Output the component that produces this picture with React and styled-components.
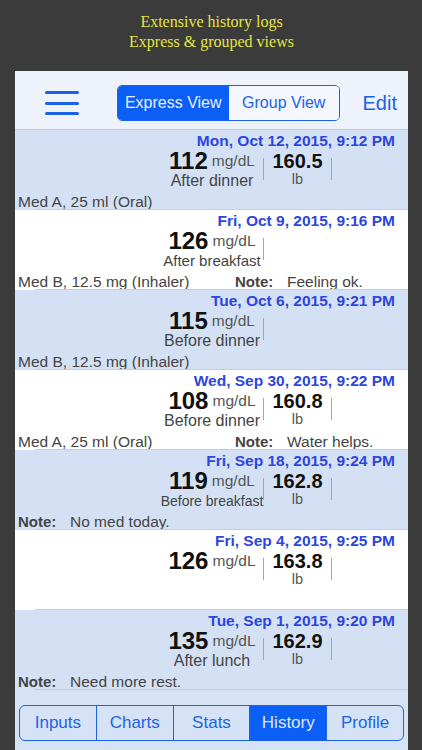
import React from "react";
import styled, { createGlobalStyle } from "styled-components";

const GlobalStyle = createGlobalStyle`
  body {
    margin: 0;
    background-color: #3b3b3b;
    font-family: "Liberation Sans", Arial, sans-serif;
  }
`;

const Page = styled.div`
  width: 422px;
  height: 750px;
  overflow: hidden;
  display: flex;
  flex-direction: column;
  padding: 0 14px 0 15px;
  box-sizing: border-box;
`;

const Caption = styled.div`
  height: 71px;
  box-sizing: border-box;
  padding-top: 12px;
  font-family: "Liberation Serif", "Times New Roman", serif;
  font-size: 16px;
  line-height: 20px;
  color: #e3e640;
  text-align: center;
`;

const Panel = styled.div`
  flex: 1;
  display: flex;
  flex-direction: column;
  background-color: #d6e2f5;
`;

const Header = styled.div`
  height: 59px;
  box-sizing: border-box;
  border-bottom: 1px solid #c6cad2;
  background-color: #eef2fa;
  display: flex;
  align-items: center;
  padding: 6px 11px 0 30px;
`;

const Hamburger = styled.div`
  width: 34px;
  display: flex;
  flex-direction: column;
  gap: 7.5px;
  margin-right: 38px;
`;

const HamburgerBar = styled.div`
  height: 3px;
  border-radius: 2px;
  background-color: #1c62e6;
`;

const Segmented = styled.div`
  width: 223px;
  height: 36px;
  box-sizing: border-box;
  border: 1.5px solid #1c62e6;
  border-radius: 5px;
  display: flex;
  overflow: hidden;
`;

const SegmentButton = styled.div`
  flex: 1;
  display: flex;
  align-items: center;
  justify-content: center;
  font-size: 16px;
  color: ${(p) => (p.$active ? "#e6eeff" : "#1c62e6")};
  background-color: ${(p) => (p.$active ? "#0b5ff5" : "#f4f7fd")};
`;

const EditButton = styled.div`
  margin-left: auto;
  font-size: 20px;
  color: #1c62e6;
`;

const Row = styled.div`
  position: relative;
  height: 80px;
  box-sizing: border-box;
  padding: 2px 13px 0 3px;
  background-color: ${(p) => (p.$blue ? "#d4e1f5" : "#ffffff")};
  display: flex;
  flex-direction: column;

  &::after {
    content: "";
    position: absolute;
    left: 20px;
    right: 0;
    bottom: 0;
    height: 1px;
    background-color: #c9ccd2;
  }
`;

const DateLine = styled.div`
  height: 18px;
  line-height: 18px;
  text-align: right;
  font-size: 15.5px;
  font-weight: 700;
  color: #2d46de;
`;

const Middle = styled.div`
  height: 42px;
  display: flex;
  align-items: flex-start;
  margin-left: 143px;
`;

const GlucoseBlock = styled.div`
  width: 102px;
  display: flex;
  flex-direction: column;
  align-items: center;
`;

const ValueLine = styled.div`
  height: 22px;
  line-height: 22px;
  white-space: nowrap;
`;

const BigValue = styled.span`
  font-size: 24px;
  font-weight: 700;
  color: #111;
`;

const Unit = styled.span`
  font-size: 15.5px;
  color: #555;
  margin-left: 4px;
  vertical-align: 3px;
`;

const Label = styled.div`
  height: 18px;
  line-height: 18px;
  font-size: ${(p) => p.$size || 16}px;
  color: #444;
  white-space: nowrap;
`;

const Divider = styled.div`
  width: 1px;
  height: 22px;
  margin-top: 8px;
  background-color: #a4a6aa;
`;

const WeightBlock = styled.div`
  width: 67px;
  display: flex;
  flex-direction: column;
  align-items: center;
`;

const WeightValue = styled.div`
  height: 22px;
  line-height: 23px;
  font-size: 20px;
  font-weight: 700;
  color: #111;
`;

const WeightUnit = styled.div`
  height: 15px;
  line-height: 15px;
  font-size: 14.5px;
  color: #555;
`;

const BottomLine = styled.div`
  margin-top: 1px;
  height: 17px;
  line-height: 17px;
  display: flex;
  font-size: 15.5px;
  color: #444;
  white-space: nowrap;
`;

const Med = styled.div`
  width: 217px;
`;

const NoteLabel = styled.span`
  display: inline-block;
  width: 52px;
  font-weight: 700;
  font-size: 15px;
`;

const TabArea = styled.div`
  padding: 15px 4px 0 4px;
`;

const TabBar = styled.div`
  height: 36px;
  box-sizing: border-box;
  border: 1.5px solid #1c62e6;
  border-radius: 6px;
  display: flex;
  overflow: hidden;
`;

const Tab = styled.div`
  flex: 1;
  display: flex;
  align-items: center;
  justify-content: center;
  font-size: 17px;
  color: ${(p) => (p.$active ? "#dfe8ff" : "#1c62e6")};
  background-color: ${(p) => (p.$active ? "#0b5ff5" : "transparent")};
  border-left: ${(p) => (p.$first ? "none" : "1.5px solid #1c62e6")};
`;

const entries = [
  {
    date: "Mon, Oct 12, 2015, 9:12 PM",
    glucose: 112,
    label: "After dinner",
    weight: "160.5",
    med: "Med A, 25 ml (Oral)",
  },
  {
    date: "Fri, Oct 9, 2015, 9:16 PM",
    glucose: 126,
    label: "After breakfast",
    labelSize: 15,
    med: "Med B, 12.5 mg (Inhaler)",
    note: "Feeling ok.",
  },
  {
    date: "Tue, Oct 6, 2015, 9:21 PM",
    glucose: 115,
    label: "Before dinner",
    med: "Med B, 12.5 mg (Inhaler)",
  },
  {
    date: "Wed, Sep 30, 2015, 9:22 PM",
    glucose: 108,
    label: "Before dinner",
    weight: "160.8",
    med: "Med A, 25 ml (Oral)",
    note: "Water helps.",
  },
  {
    date: "Fri, Sep 18, 2015, 9:24 PM",
    glucose: 119,
    label: "Before breakfast",
    labelSize: 14,
    weight: "162.8",
    note: "No med today.",
  },
  {
    date: "Fri, Sep 4, 2015, 9:25 PM",
    glucose: 126,
    weight: "163.8",
  },
  {
    date: "Tue, Sep 1, 2015, 9:20 PM",
    glucose: 135,
    label: "After lunch",
    weight: "162.9",
    note: "Need more rest.",
  },
];

const tabs = ["Inputs", "Charts", "Stats", "History", "Profile"];

const HistoryRow = ({ entry, blue }) => (
  <Row $blue={blue}>
    <DateLine>{entry.date}</DateLine>
    <Middle>
      <GlucoseBlock>
        <ValueLine>
          <BigValue>{entry.glucose}</BigValue>
          <Unit>mg/dL</Unit>
        </ValueLine>
        {entry.label && <Label $size={entry.labelSize}>{entry.label}</Label>}
      </GlucoseBlock>
      <Divider />
      {entry.weight && (
        <>
          <WeightBlock>
            <WeightValue>{entry.weight}</WeightValue>
            <WeightUnit>lb</WeightUnit>
          </WeightBlock>
          <Divider />
        </>
      )}
    </Middle>
    <BottomLine>
      {entry.med && <Med>{entry.med}</Med>}
      {entry.note && (
        <div>
          <NoteLabel>Note:</NoteLabel>
          {entry.note}
        </div>
      )}
    </BottomLine>
  </Row>
);

const App = () => {
  return (
    <>
      <GlobalStyle />
      <Page>
        <Caption>
          Extensive history logs
          <br />
          Express &amp; grouped views
        </Caption>
        <Panel>
          <Header>
            <Hamburger>
              <HamburgerBar />
              <HamburgerBar />
              <HamburgerBar />
            </Hamburger>
            <Segmented>
              <SegmentButton $active>Express View</SegmentButton>
              <SegmentButton>Group View</SegmentButton>
            </Segmented>
            <EditButton>Edit</EditButton>
          </Header>
          {entries.map((entry, i) => (
            <HistoryRow key={entry.date} entry={entry} blue={i % 2 === 0} />
          ))}
          <TabArea>
            <TabBar>
              {tabs.map((t, i) => (
                <Tab key={t} $first={i === 0} $active={t === "History"}>
                  {t}
                </Tab>
              ))}
            </TabBar>
          </TabArea>
        </Panel>
      </Page>
    </>
  );
};

export default App;
